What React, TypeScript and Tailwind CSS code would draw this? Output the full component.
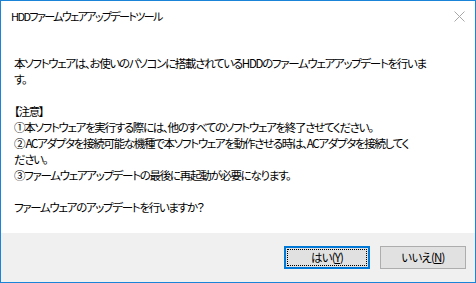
import React from 'react';

const FONT = "font-['Meiryo_UI','Noto_Sans_CJK_JP',sans-serif] [font-feature-settings:'palt']";

const lines: string[] = [
  '本ソフトウェアは、お使いのパソコンに搭載されているHDDのファームウェアアップデートを行いま',
  'す。',
  '',
  '【注意】',
  '①本ソフトウェアを実行する際には、他のすべてのソフトウェアを終了させてください。',
  '② ACアダプタを接続可能な機種で本ソフトウェアを動作させる時は、ACアダプタを接続してく',
  'ださい。',
  '③ファームウェアアップデートの最後に再起動が必要になります。',
  '',
  'ファームウェアのアップデートを行いますか？',
];

const CloseIcon = () => (
  <svg width="11" height="11" viewBox="0 0 11 11" className="block">
    <path d="M0.5 0.5 L10.5 10.5 M10.5 0.5 L0.5 10.5" stroke="#a8a8a8" strokeWidth="1" fill="none" />
  </svg>
);

const App: React.FC = () => {
  return (
    <div
      className={`w-[476px] h-[283px] border border-[#1a84d8] bg-white flex flex-col text-black ${FONT}`}
    >
      {/* title bar */}
      <div className="h-[30px] flex items-center justify-between pl-[10px] pr-[10px]">
        <span className="text-[11px] tracking-[-1.6px] leading-none">HDDファームウェアアップデートツール</span>
        <CloseIcon />
      </div>

      {/* message */}
      <div className="flex-1 pl-[13px] pt-[24px]">
        {lines.map((line, i) => (
          <div key={i} className="h-[16px] text-[11.5px] tracking-[-1.3px] leading-[16px] whitespace-nowrap">
            {line || '\u00a0'}
          </div>
        ))}
      </div>

      {/* buttons */}
      <div className="h-[49px] bg-[#f0f0f0] flex items-center justify-end gap-[10px] pr-[9px]">
        <button className="w-[86px] h-[23px] bg-[#e1e1e1] border-2 border-[#0078d7] p-[1px] text-[11.5px] tracking-[-0.8px]">
          <span className="w-full h-full flex items-center justify-center border border-dotted border-black">
            はい(<span className="underline">Y</span>)
          </span>
        </button>
        <button className="w-[86px] h-[23px] bg-[#e1e1e1] border border-[#adadad] text-[11.5px] tracking-[-0.8px] flex items-center justify-center">
          いいえ(<span className="underline">N</span>)
        </button>
      </div>
    </div>
  );
};

export default App;
